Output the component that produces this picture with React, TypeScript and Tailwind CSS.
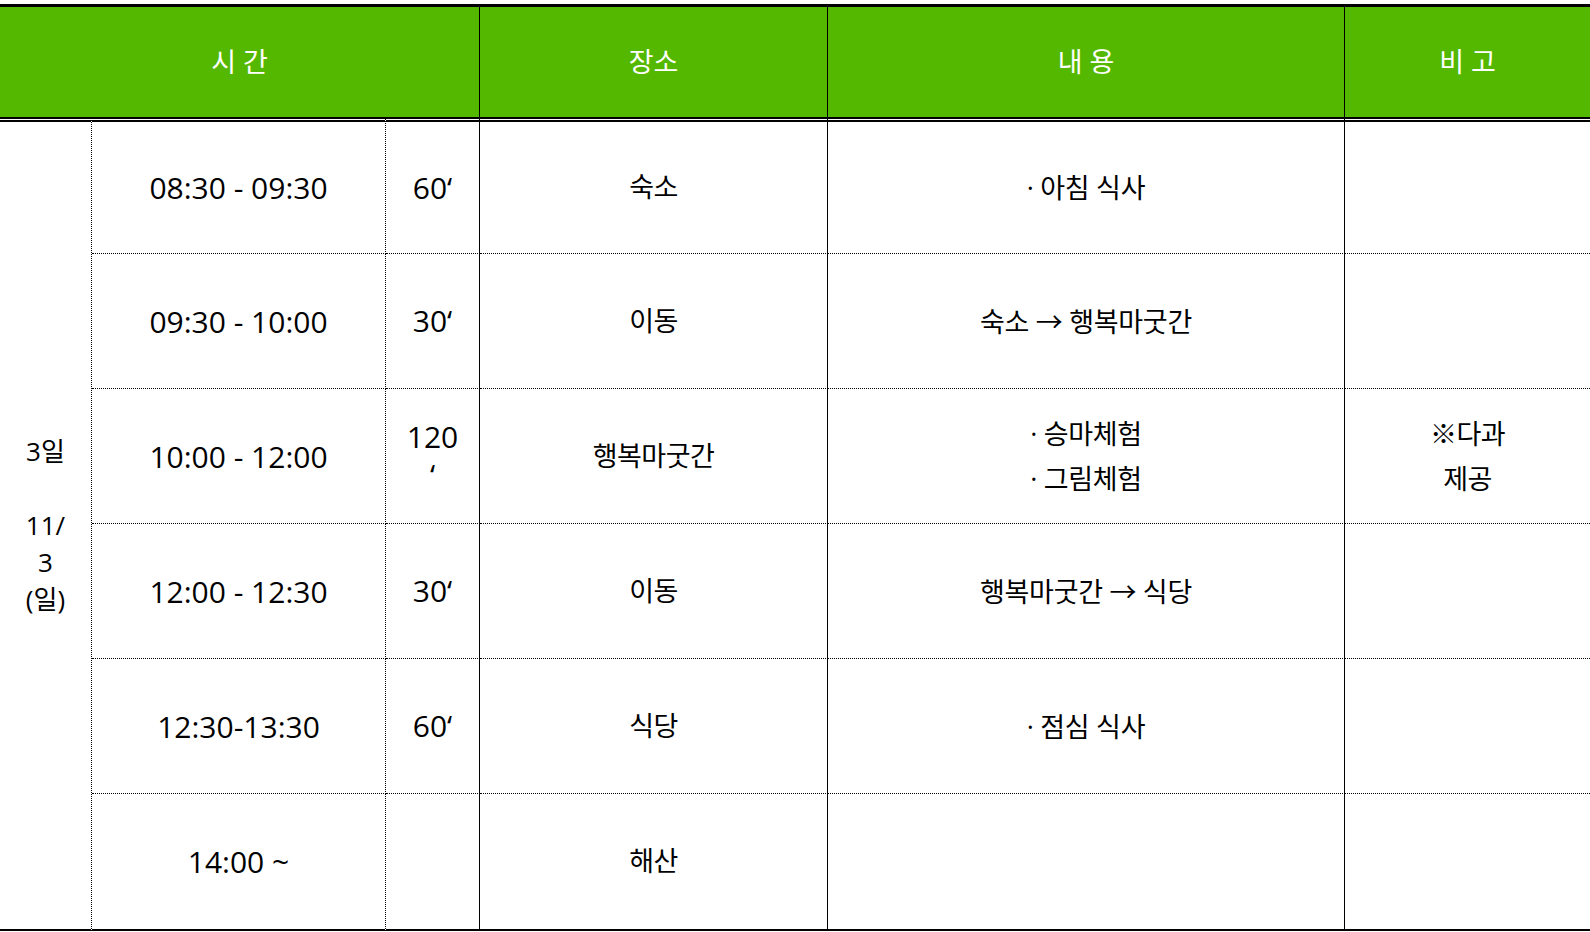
const font = { fontFamily: '"Open Sans", "Noto Sans CJK KR", sans-serif' };

type Row = {
  time: string;
  dur: React.ReactNode;
  place: string;
  content: string[];
  note: string[];
};

const rows: Row[] = [
  { time: '08:30 - 09:30', dur: '60‘', place: '숙소', content: ['· 아침 식사'], note: [] },
  { time: '09:30 - 10:00', dur: '30‘', place: '이동', content: ['숙소 → 행복마굿간'], note: [] },
  {
    time: '10:00 - 12:00',
    dur: (
      <>
        120
        <br />‘
      </>
    ),
    place: '행복마굿간',
    content: ['· 승마체험', '· 그림체험'],
    note: ['※다과', '제공'],
  },
  { time: '12:00 - 12:30', dur: '30‘', place: '이동', content: ['행복마굿간 → 식당'], note: [] },
  { time: '12:30-13:30', dur: '60‘', place: '식당', content: ['· 점심 식사'], note: [] },
  { time: '14:00 ~', dur: '', place: '해산', content: [], note: [] },
];

export default function App() {
  return (
    <div className="min-h-screen bg-white pt-1 overflow-hidden" style={font}>
      <table className="w-[1590px] table-fixed border-separate border-spacing-0 text-black">
        <colgroup>
          <col className="w-[92px]" />
          <col className="w-[294px]" />
          <col className="w-[94px]" />
          <col className="w-[348px]" />
          <col className="w-[517px]" />
          <col className="w-[245px]" />
        </colgroup>
        <thead>
          <tr className="h-[113px]">
            <th
              colSpan={3}
              className="bg-[#55b800] border-t-[3px] border-r border-black p-0 text-[27px] font-normal text-white"
            >
              시 간
            </th>
            <th className="bg-[#55b800] border-t-[3px] border-r border-black p-0 text-[27px] font-normal text-white">
              장소
            </th>
            <th className="bg-[#55b800] border-t-[3px] border-r border-black p-0 text-[27px] font-normal text-white">
              내 용
            </th>
            <th className="bg-[#55b800] border-t-[3px] border-black p-0 text-[27px] font-normal text-white">
              비 고
            </th>
          </tr>
        </thead>
        <tbody>
          {rows.map((r, i) => {
            const first = i === 0;
            const last = i === rows.length - 1;
            const tb = [
              'p-0 text-center align-middle border-black',
              first ? 'border-t-[5px] [border-top-style:double]' : '',
              last ? 'border-b-2 [border-bottom-style:solid]' : 'border-b [border-bottom-style:dotted]',
            ].join(' ');
            const h = first || last ? 'h-[137px]' : 'h-[135px]';
            return (
              <tr key={i} className={h}>
                {first && (
                  <td
                    rowSpan={rows.length}
                    className="p-0 text-center align-middle border-black border-t-[5px] [border-top-style:double] border-b-2 [border-bottom-style:solid] border-r [border-right-style:dotted] text-[26px] leading-[37px]"
                  >
                    3일
                    <br />
                    <br />
                    11/
                    <br />3<br />
                    (일)
                  </td>
                )}
                <td className={`${tb} border-r [border-right-style:dotted] text-[30px]`}>{r.time}</td>
                <td className={`${tb} border-r [border-right-style:solid] text-[30px] leading-[38px]`}>{r.dur}</td>
                <td className={`${tb} border-r [border-right-style:solid] text-[27px] tracking-[-0.5px]`}>{r.place}</td>
                <td className={`${tb} border-r [border-right-style:solid] text-[27px] leading-[45px] tracking-[-0.3px]`}>
                  {r.content.map((c) => (
                    <div key={c}>{c}</div>
                  ))}
                </td>
                <td className={`${tb} text-[27px] leading-[45px] tracking-[-0.5px]`}>
                  {r.note.map((c) => (
                    <div key={c}>{c}</div>
                  ))}
                </td>
              </tr>
            );
          })}
        </tbody>
      </table>
    </div>
  );
}
